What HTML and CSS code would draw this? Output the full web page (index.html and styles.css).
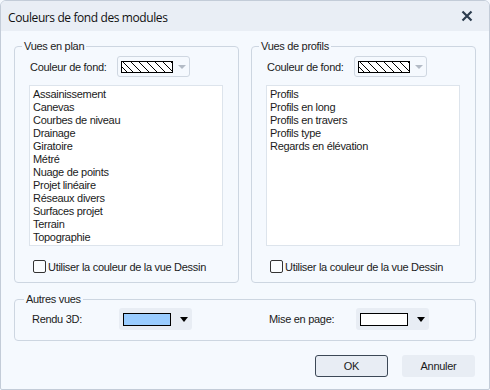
FILE: index.html
```html
<!DOCTYPE html>
<html lang="fr">
<head>
  <meta charset="UTF-8" />
  <title>Couleurs de fond des modules</title>
  <link rel="stylesheet" href="styles.css">
</head>
<body>

<div class="window">
  <div class="titlebar">
    <span class="title">Couleurs de fond des modules</span>
    <svg class="close" width="12" height="12" viewBox="0 0 12 12">
      <path d="M1.5 1.5 L10.5 10.5 M10.5 1.5 L1.5 10.5" stroke="#2c3c4e" stroke-width="2.2" fill="none"/>
    </svg>
  </div>

  <div class="content">
    <div class="top-groups">
      <fieldset class="group">
        <legend>Vues en plan</legend>
        <div class="color-row">
          <span class="label">Couleur de fond:</span>
          <div class="combo disabled">
            <svg class="hatch" width="52" height="12" viewBox="0 0 52 12">
              <rect x="0.5" y="0.5" width="51" height="11" fill="#fff" stroke="#000"/>
              <path d="M2 1 L12 11 M10 1 L20 11 M18 1 L28 11 M26 1 L36 11 M34 1 L44 11 M42 1 L51 10 M1 6 L6 11 M50 1 L51 2" stroke="#000" stroke-width="1" fill="none"/>
            </svg>
            <span class="arrow grey"></span>
          </div>
        </div>
        <ul class="listbox">
          <li>Assainissement</li>
          <li>Canevas</li>
          <li>Courbes de niveau</li>
          <li>Drainage</li>
          <li>Giratoire</li>
          <li>Métré</li>
          <li>Nuage de points</li>
          <li>Projet linéaire</li>
          <li>Réseaux divers</li>
          <li>Surfaces projet</li>
          <li>Terrain</li>
          <li>Topographie</li>
        </ul>
        <label class="check"><span class="box"></span>Utiliser la couleur de la vue Dessin</label>
      </fieldset>

      <fieldset class="group">
        <legend>Vues de profils</legend>
        <div class="color-row">
          <span class="label">Couleur de fond:</span>
          <div class="combo disabled">
            <svg class="hatch" width="52" height="12" viewBox="0 0 52 12">
              <rect x="0.5" y="0.5" width="51" height="11" fill="#fff" stroke="#000"/>
              <path d="M2 1 L12 11 M10 1 L20 11 M18 1 L28 11 M26 1 L36 11 M34 1 L44 11 M42 1 L51 10 M1 6 L6 11 M50 1 L51 2" stroke="#000" stroke-width="1" fill="none"/>
            </svg>
            <span class="arrow grey"></span>
          </div>
        </div>
        <ul class="listbox">
          <li>Profils</li>
          <li>Profils en long</li>
          <li>Profils en travers</li>
          <li>Profils type</li>
          <li>Regards en élévation</li>
        </ul>
        <label class="check"><span class="box"></span>Utiliser la couleur de la vue Dessin</label>
      </fieldset>
    </div>

    <fieldset class="group other">
      <legend>Autres vues</legend>
      <div class="other-row">
        <div class="color-row">
          <span class="label">Rendu 3D:</span>
          <div class="combo">
            <span class="swatch blue"></span>
            <span class="arrow"></span>
          </div>
        </div>
        <div class="color-row">
          <span class="label">Mise en page:</span>
          <div class="combo">
            <span class="swatch white"></span>
            <span class="arrow"></span>
          </div>
        </div>
      </div>
    </fieldset>

    <div class="buttons">
      <button class="btn default">OK</button>
      <button class="btn">Annuler</button>
    </div>
  </div>
</div>

</body>
</html>
```

FILE: styles.css
```css
body {
  margin: 0;
  background: #f5f9fe;
  color: #1b1b1b;
  font-family: "Liberation Sans", Arial, sans-serif;
  font-size: 11px;
  letter-spacing: -0.3px;
}

.window {
  box-sizing: border-box;
  width: 490px;
  height: 390px;
  border: 1px solid #c3ccd8;
  border-radius: 6px 6px 2px 2px;
  background: #f5f9fe;
  overflow: hidden;
}

/* Title bar */
.titlebar {
  height: 30px;
  background: #e9eef5;
  display: flex;
  align-items: center;
  justify-content: space-between;
  padding: 0 16px 0 7px;
}

.title {
  font-family: "Open Sans", "Noto Sans", sans-serif;
  font-size: 12px;
  letter-spacing: -0.4px;
  color: #111;
  margin-top: 3px;
}

/* Main area */
.content {
  padding: 9px 13px 0 13px;
}

.top-groups {
  display: grid;
  grid-template-columns: 225px 225px;
  column-gap: 12px;
}

.group {
  margin: 0;
  min-width: 0;
  border: 1px solid #cdd6e1;
  border-radius: 4px;
  padding: 3px 15px 9px 15px;
}

.group legend {
  margin-left: -8px;
  padding: 0 2px;
  line-height: 13px;
  color: #222;
}

.color-row {
  display: flex;
  align-items: center;
  height: 21px;
}

.label {
  width: 87px;
  flex: none;
}

/* Colour combos */
.combo {
  box-sizing: border-box;
  width: 73px;
  height: 22px;
  border-radius: 3px;
  background: #e8edf4;
  display: flex;
  align-items: center;
  padding-left: 4px;
}

.combo.disabled {
  height: 21px;
  background: none;
  border: 1px solid #cfd7e1;
  padding-left: 3px;
}

.hatch {
  display: block;
}

.swatch {
  box-sizing: border-box;
  width: 48px;
  height: 13px;
  border: 1px solid #000;
}
.swatch.blue {
  background: #99ccff;
}
.swatch.white {
  background: #fff;
}

.arrow {
  width: 0;
  height: 0;
  margin-left: 9px;
  border-left: 4.5px solid transparent;
  border-right: 4.5px solid transparent;
  border-top: 5px solid #000;
}
.arrow.grey {
  margin-left: 5px;
  border-left-width: 4px;
  border-right-width: 4px;
  border-top: 4px solid #b3bbc6;
}

/* List boxes */
.listbox {
  list-style: none;
  margin: 8px 0 0 -1px;
  padding: 2px 0 0 3px;
  height: 161px;
  box-sizing: border-box;
  background: #fff;
  border: 1px solid #dde4ec;
}

.listbox li {
  line-height: 13px;
  height: 13px;
}

/* Checkbox */
.check {
  display: flex;
  align-items: center;
  margin-top: 14px;
  margin-left: 3px;
  height: 13px;
}

.check .box {
  box-sizing: border-box;
  width: 13px;
  height: 13px;
  border: 1px solid #333;
  border-radius: 2px;
  background: #fbfdff;
  margin-right: 2px;
}

/* Autres vues */
.other {
  margin-top: 10px;
  padding: 2px 15px 10px 17px;
}

.other-row {
  display: grid;
  grid-template-columns: 237px auto;
}

.other .color-row {
  height: 22px;
}

/* Buttons */
.buttons {
  display: flex;
  justify-content: flex-end;
  gap: 14px;
  margin-top: 14px;
  padding-right: 1px;
}

.btn {
  box-sizing: border-box;
  width: 73px;
  height: 22px;
  border: none;
  border-radius: 3px;
  background: #e8edf4;
  font-family: "Liberation Sans", Arial, sans-serif;
  font-size: 11px;
  letter-spacing: -0.3px;
  color: #1b1b1b;
  padding: 0;
}

.btn.default {
  border: 1px solid #3c4856;
}
```
